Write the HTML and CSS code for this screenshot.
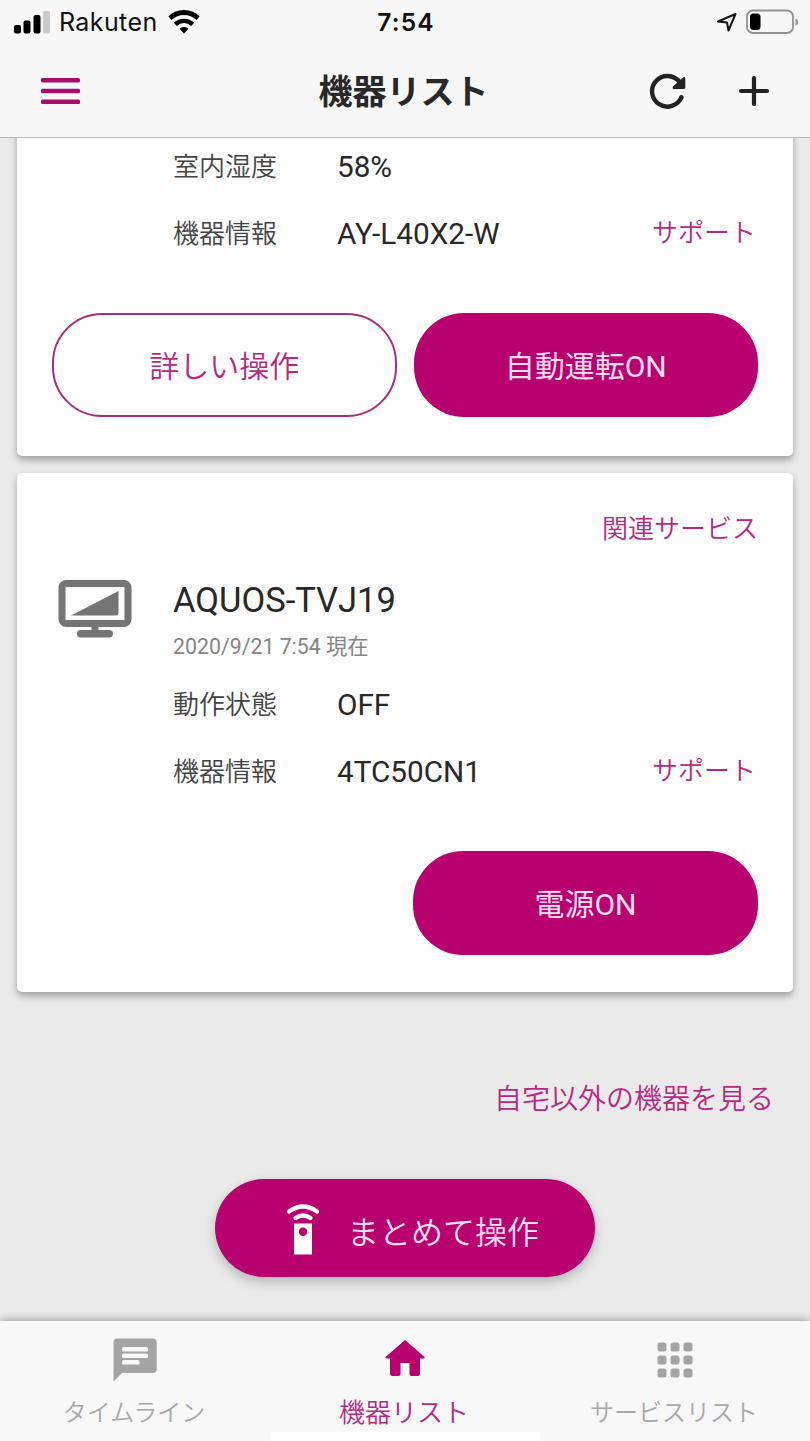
FILE: index.html
```
<!DOCTYPE html>
<html lang="ja">
<head>
  <meta charset="UTF-8" />
  <meta name="viewport" content="width=device-width, initial-scale=1.0"/>
  <title>機器リスト</title>
  <link rel="stylesheet" href="styles.css">
</head>
<body>
  <header>
    <div class="status-bar">
      <div class="carrier">
        <svg class="signal" width="38" height="24" viewBox="0 0 38 24">
          <rect x="1" y="15" width="7" height="8.500" rx="2"/>
          <rect x="10.500" y="10.500" width="7" height="13" rx="2"/>
          <rect x="20.500" y="5" width="7" height="18.500" rx="2"/>
          <rect x="30" y="1" width="7" height="22.500" rx="2" fill="#c9c9c9"/>
        </svg>
        <span>Rakuten</span>
        <svg class="wifi" width="34" height="26" viewBox="0 0 34 26" fill="none" stroke="#000">
          <path d="M3 9.200 C11 1.600 23 1.600 31 9.200" stroke-width="4.800"/>
          <path d="M8.300 15.400 C13.300 10.700 20.700 10.700 25.700 15.400" stroke-width="4.300"/>
          <path d="M12.600 19.800 C15.300 17.500 18.700 17.500 21.400 19.800 L17 24.500 Z" fill="#000" stroke="none"/>
        </svg>
      </div>
      <div class="time">7:54</div>
      <div class="battery">
        <svg width="20" height="20" viewBox="0 0 20 20" fill="none" stroke="#111" stroke-width="2" stroke-linejoin="round">
          <path d="M1 9.500 L18.500 2 L11.500 18.500 L10 10.500 Z"/>
        </svg>
        <svg width="54" height="26" viewBox="0 0 54 26">
          <rect x="2" y="1.500" width="46" height="22.500" rx="6" fill="none" stroke="#929292" stroke-width="1.800"/>
          <rect x="5" y="4.500" width="10.500" height="16.500" rx="3.500"/>
          <path d="M50.500 9.500 Q53 10 53 13 Q53 16 50.500 16.500 Z" fill="#929292"/>
        </svg>
      </div>
    </div>
    <div class="nav-bar">
      <svg class="menu" width="40" height="28" viewBox="0 0 40 28">
        <rect x="1" y="1" width="39" height="4.600" rx="1.500"/>
        <rect x="1" y="11.700" width="39" height="4.600" rx="1.500"/>
        <rect x="1" y="22.400" width="39" height="4.600" rx="1.500"/>
      </svg>
      <h1>機器リスト</h1>
      <div class="nav-actions">
        <svg width="38" height="38" viewBox="0 0 38 38">
          <path d="M32.500 25.200 A15.300 15.300 0 1 1 30.500 10" fill="none" stroke="#222" stroke-width="4.400" stroke-linecap="round"/>
          <path d="M24.500 17 L35 17 Q36.300 17 36.300 15.600 L36.300 6 Q35.800 4.300 34 5.500 L24 14.500 Q23 17 24.500 17 Z" fill="#222"/>
        </svg>
        <svg width="32" height="32" viewBox="0 0 32 32" fill="none" stroke="#222" stroke-width="4.200" stroke-linecap="round">
          <path d="M16 3 V29 M3 16 H29"/>
        </svg>
      </div>
    </div>
  </header>

  <main>
    <section class="card card-aircon">
      <div class="row">
        <span class="label">室内湿度</span>
        <span class="value">58%</span>
      </div>
      <div class="row">
        <span class="label">機器情報</span>
        <span class="value">AY-L40X2-W</span>
        <a class="support">サポート</a>
      </div>
      <div class="buttons">
        <button type="button" class="outline">詳しい操作</button>
        <button type="button">自動運転ON</button>
      </div>
    </section>

    <section class="card card-tv">
      <a class="related">関連サービス</a>
      <div class="device">
        <svg width="74" height="60" viewBox="0 0 74 60" fill="#757575">
          <rect x="4" y="4.500" width="66" height="40" rx="4" fill="none" stroke="#757575" stroke-width="7"/>
          <path d="M13 36.500 L60.500 12 V34 Q60.500 36.500 58 36.500 Z"/>
          <rect x="33.500" y="46" width="7" height="7"/>
          <rect x="19" y="51" width="36" height="7.500" rx="3.700"/>
        </svg>
        <div>
          <h2>AQUOS-TVJ19</h2>
          <p>2020/9/21 7:54 現在</p>
        </div>
      </div>
      <div class="row">
        <span class="label">動作状態</span>
        <span class="value">OFF</span>
      </div>
      <div class="row">
        <span class="label">機器情報</span>
        <span class="value">4TC50CN1</span>
        <a class="support">サポート</a>
      </div>
      <div class="buttons">
        <button type="button">電源ON</button>
      </div>
    </section>

    <a class="other-devices">自宅以外の機器を見る</a>

    <button type="button" class="remote">
      <svg width="34" height="52" viewBox="0 0 34 52" fill="none" stroke="#fff" stroke-width="4.200" stroke-linecap="round">
        <path d="M3 7.500 Q17 -2.500 31 7.500"/>
        <path d="M9.500 14 Q17 9 24.500 14"/>
        <path d="M8 19.500 H26 V50.500 H8 Z M17 23.500 A4.200 4.200 0 1 0 17 31.900 A4.200 4.200 0 1 0 17 23.500 Z" fill="#fff" fill-rule="evenodd" stroke="none"/>
      </svg>
      <span>まとめて操作</span>
    </button>
  </main>

  <nav class="tab-bar">
    <a class="tab">
      <svg width="44" height="44" viewBox="0 0 44 44">
        <path d="M4 0.500 H40 Q43.700 0.500 43.700 4.500 V31 Q43.700 35 40 35 H9 L0.500 43.500 V4.500 Q0.500 0.500 4 0.500 Z" fill="#a4a4a4"/>
        <g fill="#f8f8f8">
          <rect x="9" y="9" width="26" height="4.500" rx="1.500"/>
          <rect x="9" y="15.500" width="26" height="4.500" rx="1.500"/>
          <rect x="9" y="22" width="17.500" height="4.500" rx="1.500"/>
        </g>
      </svg>
      <span>タイムライン</span>
    </a>
    <a class="tab active">
      <svg width="44" height="44" viewBox="0 0 44 44" fill="#b9006f">
        <path d="M22 2 L41.500 19 Q42 20.500 40.500 20.500 H37 V35.500 Q37 38 34.500 38 H28.500 Q26.500 38 26.500 36 V25 H17.500 V36 Q17.500 38 15.500 38 H9.500 Q7 38 7 35.500 V20.500 H3.500 Q2 20.500 2.500 19 Z"/>
      </svg>
      <span>機器リスト</span>
    </a>
    <a class="tab">
      <svg width="44" height="44" viewBox="0 0 44 44" fill="#a4a4a4">
        <rect x="4.500" y="4.500" width="9" height="9" rx="2.500"/>
        <rect x="17.500" y="4.500" width="9" height="9" rx="2.500"/>
        <rect x="30.500" y="4.500" width="9" height="9" rx="2.500"/>
        <rect x="4.500" y="17.500" width="9" height="9" rx="2.500"/>
        <rect x="17.500" y="17.500" width="9" height="9" rx="2.500"/>
        <rect x="30.500" y="17.500" width="9" height="9" rx="2.500"/>
        <rect x="4.500" y="30.500" width="9" height="9" rx="2.500"/>
        <rect x="17.500" y="30.500" width="9" height="9" rx="2.500"/>
        <rect x="30.500" y="30.500" width="9" height="9" rx="2.500"/>
      </svg>
      <span>サービスリスト</span>
    </a>
    <div class="indicator"></div>
  </nav>
</body>
</html>
```
FILE: styles.css
```
* {
  box-sizing: border-box;
}
body {
  margin: 0;
  height: 1441px;
  display: flex;
  flex-direction: column;
  overflow: hidden;
  background: #eaeaea;
  color: #282828;
  font-family: Roboto, "Noto Sans CJK JP", sans-serif;
}
svg {
  display: block;
  flex: none;
}
h1, h2, p {
  margin: 0;
}

/* header */
header {
  height: 138px;
  background: #f7f7f7;
  border-bottom: 1px solid #b8b8b8;
}
.status-bar {
  height: 44px;
  padding: 0 11px 0 13px;
  display: grid;
  grid-template-columns: 1fr auto 1fr;
  align-items: center;
  font-family: Inter, sans-serif;
  font-size: 25px;
  color: #111;
}
.carrier {
  display: flex;
  align-items: center;
}
.carrier span {
  margin-left: 8px;
  letter-spacing: 0.4px;
}
.wifi {
  margin-left: 9px;
}
.time {
  font-size: 24.5px;
  font-weight: 600;
  letter-spacing: 1.2px;
}
.battery {
  display: flex;
  justify-content: flex-end;
  align-items: center;
  gap: 8px;
}
.nav-bar {
  height: 94px;
  padding: 0 40px;
  display: grid;
  grid-template-columns: 1fr auto 1fr;
  align-items: center;
}
.menu {
  fill: #a80d6a;
}
h1 {
  padding: 2px 3px 0 0;
  font-size: 34px;
  line-height: 40px;
  font-weight: bold;
}
.nav-actions {
  display: flex;
  justify-content: flex-end;
  align-items: center;
  gap: 51px;
}

/* device cards */
main {
  flex: 1;
  min-height: 0;
  overflow: hidden;
  display: flex;
  flex-direction: column;
  align-items: center;
}
.card {
  flex: none;
  width: 776px;
  padding: 0 35px;
  margin-bottom: 17px;
  background: #fdfdfd;
  border-radius: 5px;
  box-shadow: 0 4px 7px rgba(0, 0, 0, 0.32);
}
.card-aircon {
  height: 338px;
  margin-top: -20px;
  padding-top: 15px;
}
.card-tv {
  height: 519px;
  padding-top: 36px;
}
.related {
  display: block;
  text-align: right;
  font-size: 26px;
  line-height: 40px;
}
.device {
  display: flex;
  height: 122px;
  padding: 30px 0 0 6px;
}
.device div {
  margin-left: 41px;
}
h2 {
  font-size: 34.5px;
  line-height: 42px;
  font-weight: normal;
}
p {
  margin-top: 13px;
  font-size: 21.3px;
  line-height: 26px;
  color: #858585;
}
.row {
  display: flex;
  align-items: center;
  height: 67px;
  padding-left: 121px;
}
.label {
  width: 164px;
  padding-bottom: 4px;
  font-size: 26px;
  color: #444;
}
.value {
  font-size: 29.7px;
}
.support {
  margin-left: auto;
  padding: 0 2px 6px 0;
  font-size: 26px;
}
a {
  color: #b52a80;
}
.label, .support, .related, .outline, .remote, .other-devices, .tab {
  font-weight: 350;
}
.buttons {
  display: flex;
  justify-content: flex-end;
  gap: 17px;
  margin-top: 46px;
}
button {
  width: 345px;
  height: 104px;
  padding: 0 0 3px;
  border: none;
  border-radius: 50px;
  background: #b9006f;
  color: #fbdff0;
  font-family: inherit;
  font-size: 30px;
}
.outline {
  border: 2px solid #a8307a;
  background: none;
  color: #b52a80;
}
.other-devices {
  align-self: flex-end;
  margin: 71px 36px 0 0;
  font-size: 28px;
  line-height: 40px;
}
.remote {
  flex: none;
  display: flex;
  align-items: center;
  gap: 27px;
  width: 380px;
  height: 98px;
  margin-top: 59px;
  padding: 4px 0 0 71px;
  font-size: 32px;
  box-shadow: 0 5px 12px rgba(0, 0, 0, 0.22);
}

/* bottom tabs */
.tab-bar {
  position: relative;
  height: 120px;
  display: grid;
  grid-template-columns: repeat(3, 1fr);
  background: #f8f8f8;
  box-shadow: 0 -1px 8px rgba(0, 0, 0, 0.35);
}
.tab {
  display: flex;
  flex-direction: column;
  align-items: center;
  padding-top: 17px;
  font-size: 24px;
  line-height: 36px;
  color: #a8a8a8;
}
.tab span {
  margin: 13px 2px 0 0;
}
.active {
  font-size: 26px;
  color: #b52a80;
}
.indicator {
  position: absolute;
  left: 270px;
  bottom: 0;
  width: 270px;
  height: 9px;
  background: #fff;
}
```
